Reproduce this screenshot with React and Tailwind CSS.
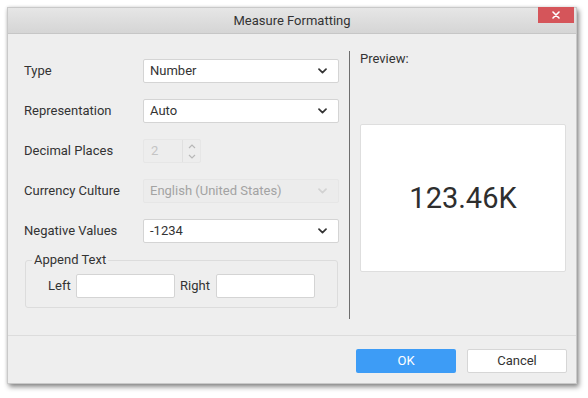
import React from "react";

function Chevron({ color = "#333" }) {
  return (
    <svg width="9" height="6" viewBox="0 0 9 6" fill="none">
      <polyline points="1,1.2 4.5,4.6 8,1.2" stroke={color} strokeWidth="1.7" strokeLinecap="round" strokeLinejoin="round" />
    </svg>
  );
}

function Select({ value, disabled }) {
  return (
    <div
      className={
        "flex items-center justify-between w-[196px] h-[24px] pl-[6px] pr-[11px] rounded-[2px] border " +
        (disabled
          ? "bg-[#ececec] border-[#e6e6e6] text-[#a3a3a3]"
          : "bg-white border-[#d4d4d4] text-[#333333]")
      }
    >
      <span className="text-[13px] leading-[16px]">{value}</span>
      <Chevron color={disabled ? "#d2d2d2" : "#333"} />
    </div>
  );
}

function Row({ label, children }) {
  return (
    <div className="flex items-center h-[24px]">
      <div className="w-[119px] text-[13px] leading-[16px] text-[#333333]">{label}</div>
      {children}
    </div>
  );
}

export default function App() {
  return (
    <div className="w-[588px] h-[398px] bg-white pl-[7px] pt-[7px] font-['Roboto',sans-serif]">
      <div className="w-[570px] h-[377px] flex flex-col bg-[#eeeeee] border border-[#c9c9c9] shadow-[2px_3px_5px_rgba(0,0,0,0.45),0_0_3px_rgba(0,0,0,0.12)]">
        {/* Title bar */}
        <div className="relative h-[26px] shrink-0 flex items-center justify-center bg-gradient-to-b from-[#e6e6e6] to-[#d5d5d5] border-b border-[#c6c6c6]">
          <span className="text-[13px] leading-[16px] text-[#333333]">Measure Formatting</span>
          <div className="absolute top-[-1px] right-[2px] w-[36px] h-[16px] bg-[#d5555a] flex items-center justify-center">
            <svg width="8" height="8" viewBox="0 0 8 8">
              <path d="M1 1 L7 7 M7 1 L1 7" stroke="white" strokeWidth="1.6" strokeLinecap="round" />
            </svg>
          </div>
        </div>

        {/* Body */}
        <div className="flex h-[301px] shrink-0">
          <div className="w-[341px] pl-[16px] pt-[25px] flex flex-col">
            <div className="flex flex-col gap-[16px]">
              <Row label="Type">
                <Select value="Number" />
              </Row>
              <Row label="Representation">
                <Select value="Auto" />
              </Row>
              <Row label="Decimal Places">
                <div className="flex items-stretch w-[58px] h-[24px] rounded-[2px] border border-[#e6e6e6] bg-[#ededed]">
                  <div className="flex-1 pl-[7px] flex items-center text-[13px] leading-[16px] text-[#c4c4c4]">2</div>
                  <div className="w-[18px] border-l border-[#e0e0e0] flex flex-col items-center justify-center gap-[5px]">
                    <svg width="8" height="5" viewBox="0 0 8 5" fill="none">
                      <polyline points="1,4 4,1 7,4" stroke="#b8b8b8" strokeWidth="1.2" />
                    </svg>
                    <svg width="8" height="5" viewBox="0 0 8 5" fill="none">
                      <polyline points="1,1 4,4 7,1" stroke="#b8b8b8" strokeWidth="1.2" />
                    </svg>
                  </div>
                </div>
              </Row>
              <Row label="Currency Culture">
                <Select value="English (United States)" disabled />
              </Row>
              <Row label="Negative Values">
                <Select value="-1234" />
              </Row>
            </div>

            <fieldset className="mt-[9px] ml-[1px] w-[313px] h-[56px] border border-[#dcdcdc] rounded-[3px] pl-[6px] pb-[9px]">
              <legend className="px-[2px] text-[13px] leading-[16px] text-[#333333]">Append Text</legend>
              <div className="flex items-center mt-[6px] ml-[16px]">
                <span className="text-[13px] leading-[16px] text-[#333333] w-[28px]">Left</span>
                <div className="w-[99px] h-[24px] bg-white border border-[#d4d4d4] rounded-[2px]" />
                <span className="ml-[5px] text-[13px] leading-[16px] text-[#333333] w-[36px]">Right</span>
                <div className="w-[99px] h-[24px] bg-white border border-[#d4d4d4] rounded-[2px]" />
              </div>
            </fieldset>
          </div>

          <div className="mt-[17px] mb-[16px] border-l border-[#6e6e6e] pl-[10px] flex flex-col">
            <div className="text-[13px] leading-[16px] text-[#333333]">Preview:</div>
            <div className="mt-[57px] w-[206px] h-[148px] bg-white border border-[#dedede] rounded-[2px] flex items-center justify-center">
              <span className="text-[29px] leading-[34px] text-[#2e2e2e]">123.46K</span>
            </div>
          </div>
        </div>

        {/* Footer */}
        <div className="flex-1 border-t border-[#dcdcdc] flex justify-end items-start pt-[13px] pr-[9px] gap-[11px]">
          <div className="w-[100px] h-[24px] rounded-[2px] bg-[#3d9cf6] flex items-center justify-center text-[13px] leading-[16px] text-white">
            OK
          </div>
          <div className="w-[100px] h-[24px] rounded-[2px] bg-white border border-[#d6d6d6] flex items-center justify-center text-[13px] leading-[16px] text-[#333333]">
            Cancel
          </div>
        </div>
      </div>
    </div>
  );
}
